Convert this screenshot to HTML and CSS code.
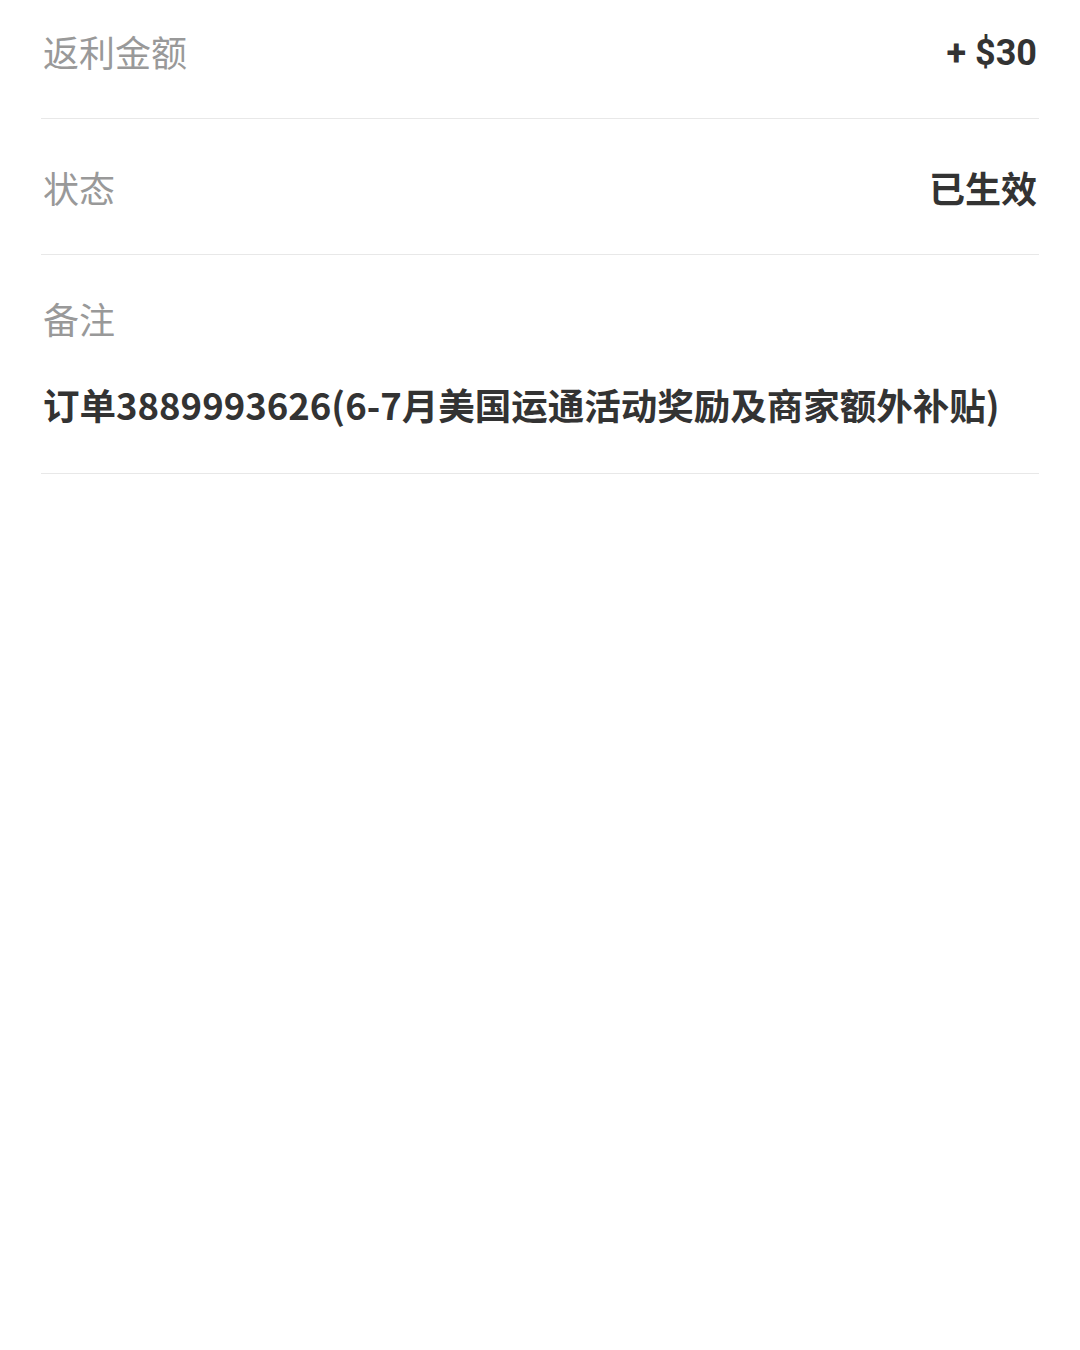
FILE: index.html
```html
<!DOCTYPE html>
<html lang="zh-CN">
<head>
<meta charset="utf-8">
<title>返利详情</title>
<link rel="stylesheet" href="styles.css">
</head>
<body>
  <main class="detail">
    <div class="row">
      <span class="label">返利金额</span>
      <span class="value value-amount">+ $30</span>
    </div>
    <div class="row">
      <span class="label">状态</span>
      <span class="value">已生效</span>
    </div>
    <div class="note">
      <span class="label">备注</span>
      <p class="note-text">订单3889993626(6-7月美国运通活动奖励及商家额外补贴)</p>
    </div>
  </main>
</body>
</html>
```

FILE: styles.css
```css
html, body {
  margin: 0;
  padding: 0;
  background: #ffffff;
}

body {
  font-family: "Noto Sans CJK SC", "Noto Sans", sans-serif;
  width: 1080px;
  height: 1350px;
  overflow: hidden;
}

.detail {
  margin: -17px 41px 0 41px;
}

.row {
  height: 135px;
  display: flex;
  align-items: center;
  justify-content: space-between;
  border-bottom: 1px solid #e8e8e8;
}

.label {
  font-size: 36px;
  line-height: 1;
  color: #999999;
  padding-left: 2px;
}

.value {
  font-size: 36px;
  line-height: 1;
  font-weight: 700;
  color: #333333;
  padding-right: 2px;
}

.value-amount {
  font-family: Roboto, "Noto Sans CJK SC", sans-serif;
  position: relative;
  top: 2px;
}

.note {
  display: flex;
  flex-direction: column;
  border-bottom: 1px solid #e8e8e8;
  padding: 45px 0 50px;
}

.note-text {
  margin: 51px 0 0;
  padding-left: 2px;
  font-size: 36.5px;
  line-height: 36px;
  font-weight: 700;
  color: #333333;
}
```
